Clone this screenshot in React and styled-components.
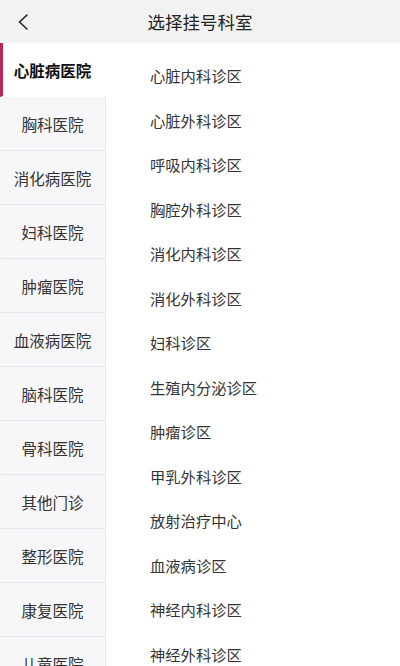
import React, { useState } from 'react';
import styled, { createGlobalStyle } from 'styled-components';

const hospitals = ['心脏病医院', '胸科医院', '消化病医院', '妇科医院', '肿瘤医院', '血液病医院', '脑科医院', '骨科医院', '其他门诊', '整形医院', '康复医院', '儿童医院'];

const depts = ['心脏内科诊区', '心脏外科诊区', '呼吸内科诊区', '胸腔外科诊区', '消化内科诊区', '消化外科诊区', '妇科诊区', '生殖内分泌诊区', '肿瘤诊区', '甲乳外科诊区', '放射治疗中心', '血液病诊区', '神经内科诊区', '神经外科诊区'];

function App() {
    const [active, setActive] = useState(0)

    return (
        <Page>
            <GlobalStyle />
            <Header>
                <BackButton>
                    <svg width="12" height="16" viewBox="0 0 12 16">
                        <path d="M10 1 L2.5 8 L10 15" fill="none" stroke="#222" strokeWidth="1.6" strokeLinecap="round" strokeLinejoin="round" />
                    </svg>
                </BackButton>
                <Title>选择挂号科室</Title>
            </Header>
            <Body>
                <Sidebar>
                    {hospitals.map((h, i) => (
                        <SideItem key={h} active={i === active} onClick={() => setActive(i)}>{h}</SideItem>
                    ))}
                </Sidebar>
                <DeptList>
                    {depts.map(d => <Dept key={d}>{d}</Dept>)}
                </DeptList>
            </Body>
        </Page>
    )
}

export default App

const GlobalStyle = createGlobalStyle`
    body {
        margin: 0;
        background: #fff;
        font-family: "Noto Sans CJK SC", "Noto Sans", sans-serif;
    }
`

const Page = styled.div`
    width: 400px;
    height: 666px;
    overflow: hidden;
    display: flex;
    flex-direction: column;
`

const Header = styled.div`
    height: 43px;
    flex-shrink: 0;
    background: #f2f2f2;
    display: flex;
    align-items: center;
    justify-content: center;
    position: relative;
`

const BackButton = styled.div`
    position: absolute;
    left: 17px;
    top: 14px;
    display: flex;
    cursor: pointer;
`

const Title = styled.div`
    font-size: 17.5px;
    color: #222;
`

const Body = styled.div`
    display: flex;
    flex: 1;
    min-height: 0;
`

const Sidebar = styled.div`
    width: 106px;
    flex-shrink: 0;
    display: flex;
    flex-direction: column;
`

const SideItem = styled.div`
    height: 54px;
    flex-shrink: 0;
    box-sizing: border-box;
    display: flex;
    align-items: center;
    justify-content: center;
    font-size: 15.5px;
    cursor: pointer;
    color: ${p => p.active ? '#111' : '#333'};
    font-weight: ${p => p.active ? 700 : 400};
    background: ${p => p.active ? '#fff' : '#f7f7f9'};
    border-left: 3px solid ${p => p.active ? '#b92659' : 'transparent'};
    border-right: 1px solid ${p => p.active ? 'transparent' : '#e8e8ec'};
    border-bottom: 1px solid ${p => p.active ? 'transparent' : '#e6e6ea'};
    padding-right: 3px;
`

const DeptList = styled.div`
    flex: 1;
    padding: 10px 0 0 44px;
    display: flex;
    flex-direction: column;
`

const Dept = styled.div`
    height: 44.5px;
    flex-shrink: 0;
    display: flex;
    align-items: center;
    font-size: 15.3px;
    color: #333;
`
